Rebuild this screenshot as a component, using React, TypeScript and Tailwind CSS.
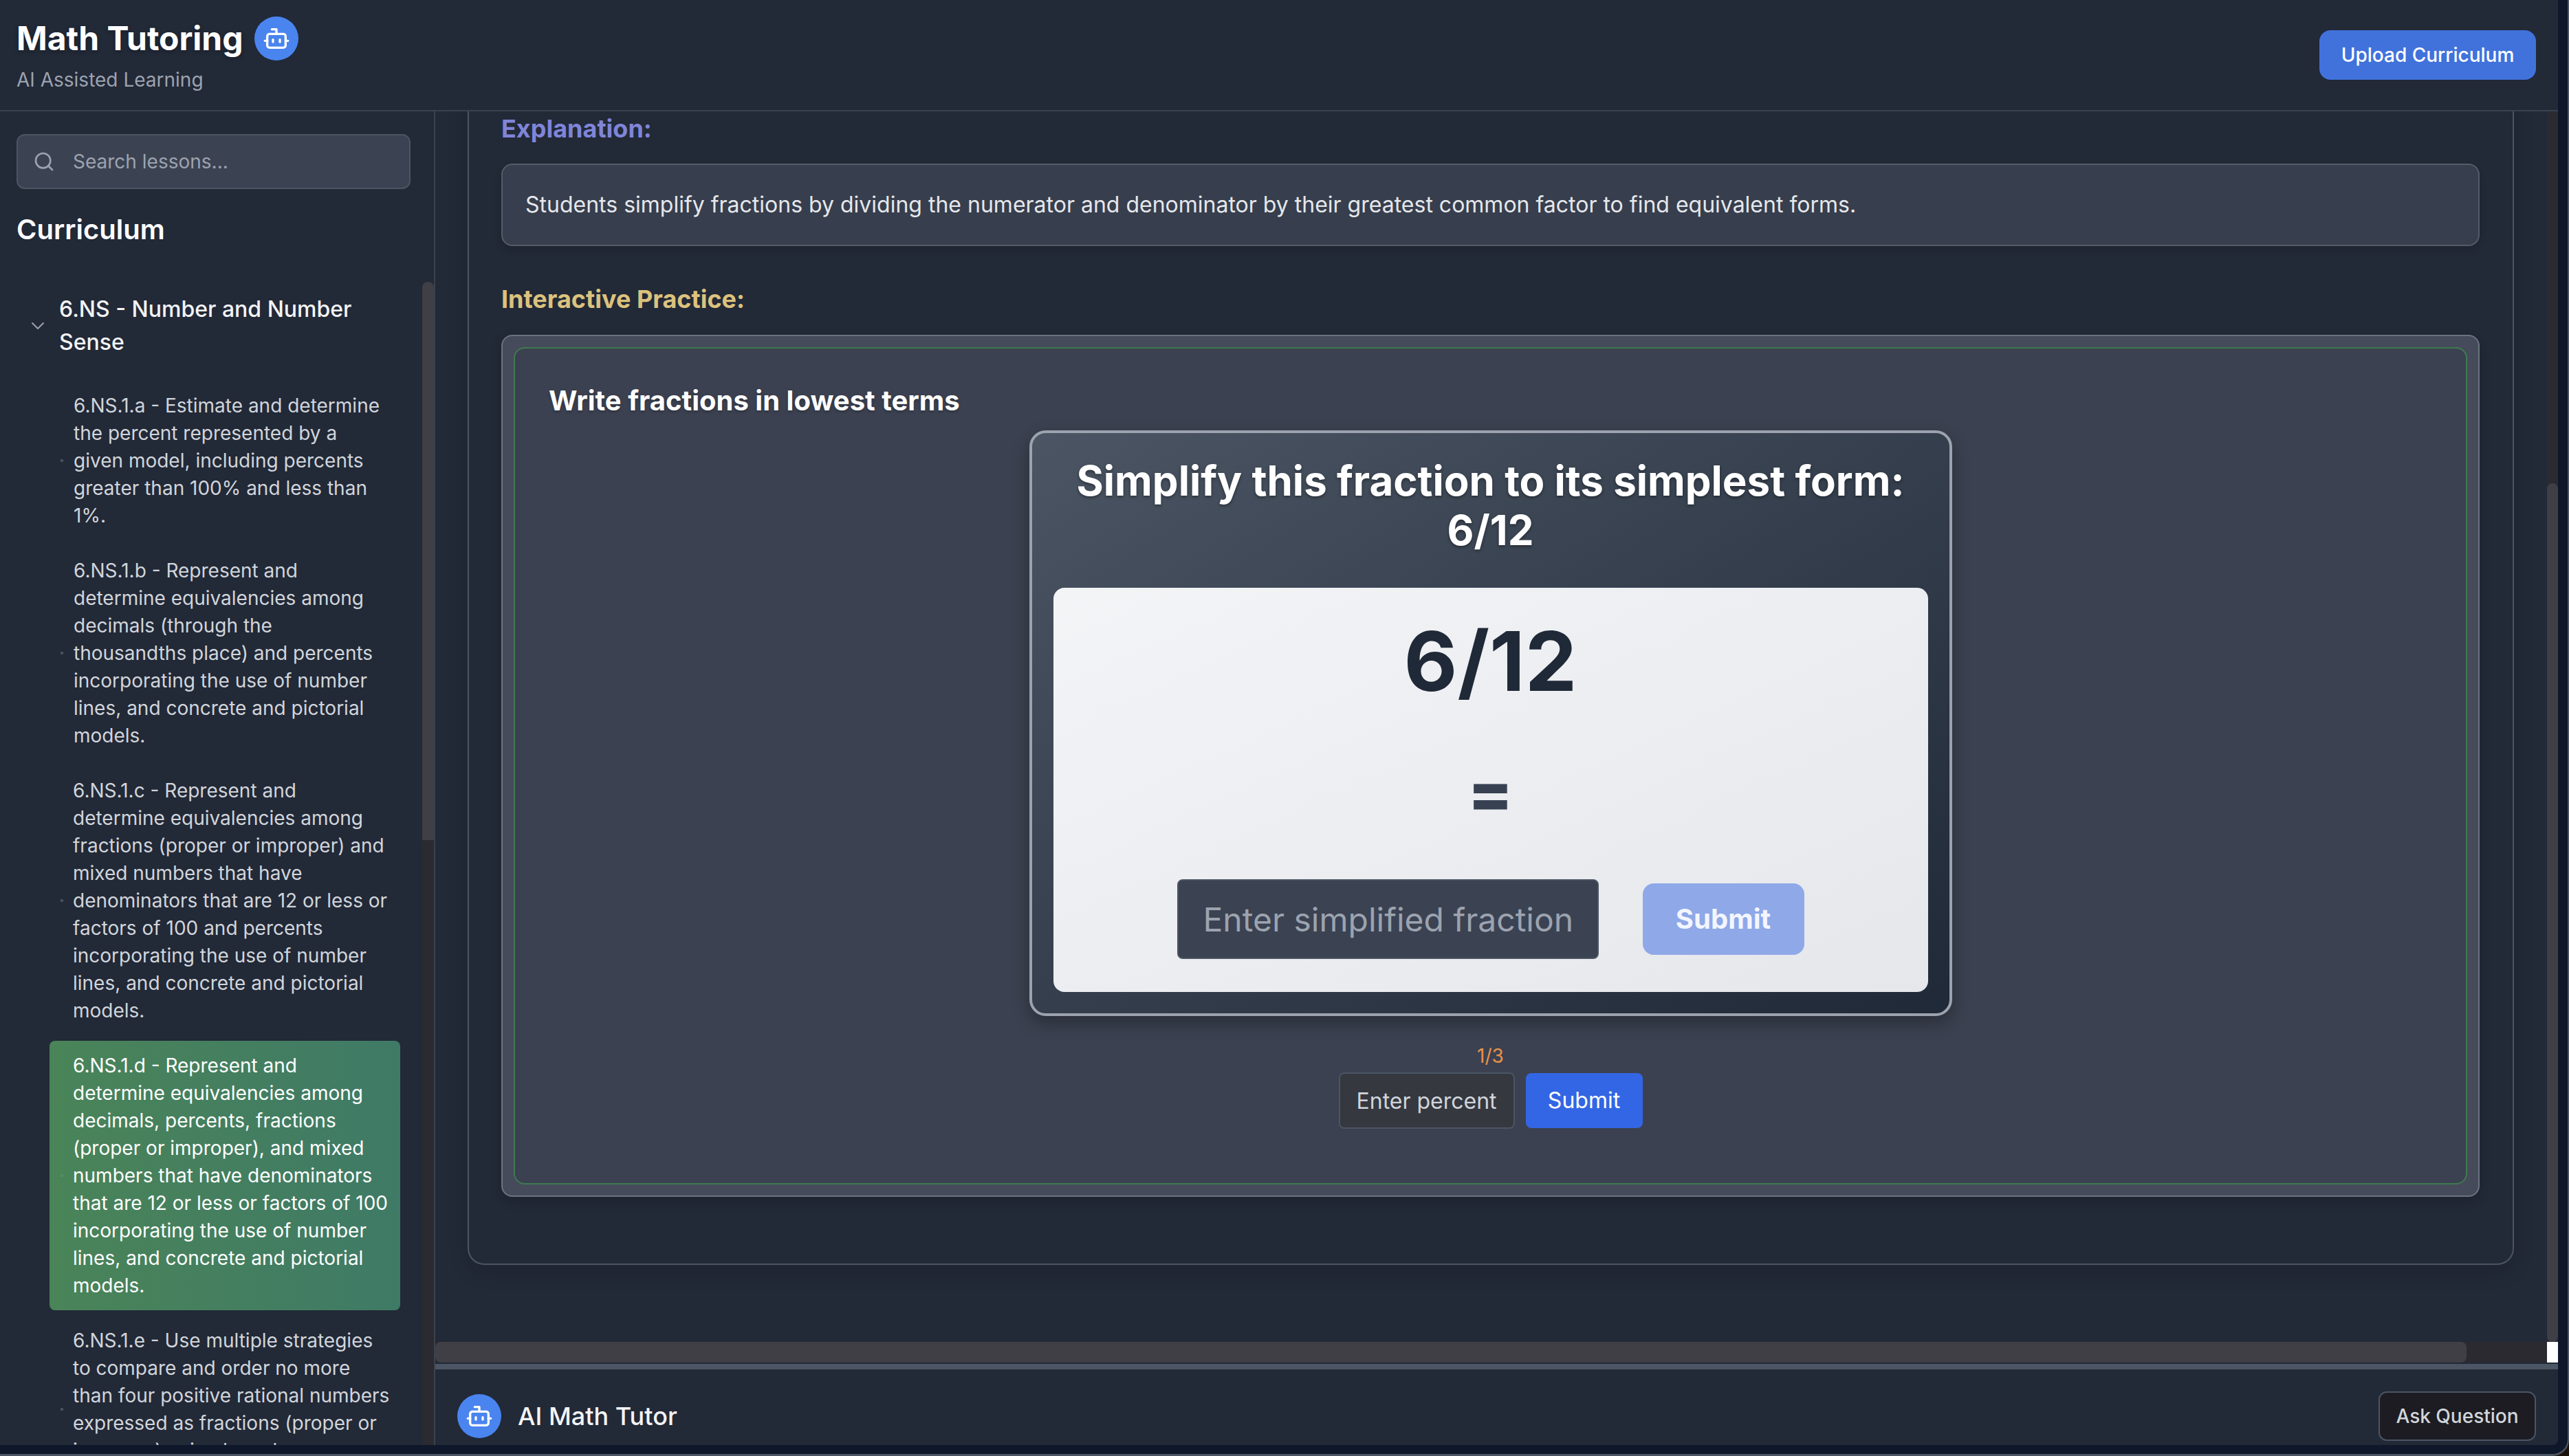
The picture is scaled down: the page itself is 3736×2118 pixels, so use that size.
import { Bot, Search, ChevronDown } from "lucide-react";

const items = [
  { text: "6.NS.1.a - Estimate and determine the percent represented by a given model, including percents greater than 100% and less than 1%.", gap: "gap-[15px]", width: "w-[459px]", active: false },
  { text: "6.NS.1.b - Represent and determine equivalencies among decimals (through the thousandths place) and percents incorporating the use of number lines, and concrete and pictorial models.", gap: "gap-[15px]", width: "w-[459px]", active: false },
  { text: "6.NS.1.c - Represent and determine equivalencies among fractions (proper or improper) and mixed numbers that have denominators that are 12 or less or factors of 100 and percents incorporating the use of number lines, and concrete and pictorial models.", gap: "gap-[14px]", width: "w-[459px]", active: false },
  { text: "6.NS.1.d - Represent and determine equivalencies among decimals, percents, fractions (proper or improper), and mixed numbers that have denominators that are 12 or less or factors of 100 incorporating the use of number lines, and concrete and pictorial models.", gap: "gap-[14px]", width: "w-[459px]", active: true },
  { text: "6.NS.1.e - Use multiple strategies to compare and order no more than four positive rational numbers expressed as fractions (proper or improper), mixed numbers, decimals, and percents.", gap: "gap-[14px]", width: "w-[463px]", active: false },
];

function Avatar() {
  return (
    <div className="w-16 h-16 rounded-full bg-[#4a84ef] flex items-center justify-center shrink-0">
      <Bot size={40} color="#ffffff" strokeWidth={2} />
    </div>
  );
}

export default function App() {
  return (
    <div className="w-[3736px] h-[2118px] bg-[#1d130c] overflow-hidden font-['Inter',sans-serif]">
      <div className="w-full h-full bg-[#0f172a] border-r-2 border-b-[3px] border-[#4b5563] rounded-br-[24px] pr-[14px] pb-[13px]">
        <div className="w-full h-full flex flex-col bg-[#222937] rounded-br-lg overflow-hidden">
          <header className="h-[162px] shrink-0 border-b-2 border-[#3a4250] flex justify-between pl-6 pr-8">
            <div className="pt-6">
              <div className="flex items-center gap-4">
                <h1 className="text-[48px] leading-[64px] font-bold text-white [text-shadow:0_2px_6px_rgba(0,0,0,0.3)]">Math Tutoring</h1>
                <Avatar />
              </div>
              <p className="text-[28px] leading-10 text-[#9ca3af] mt-2">AI Assisted Learning</p>
            </div>
            <button className="self-start mt-11 w-[315px] h-[72px] rounded-2xl bg-[#4172dc] text-white text-[28px] font-medium">Upload Curriculum</button>
          </header>

          <div className="flex flex-1 min-h-0">
            <aside className="w-[633px] shrink-0 border-r-2 border-[#3a4250] flex overflow-hidden">
              <div className="flex-1 min-w-0 pt-[33px] pl-6">
                <div className="w-[573px] h-20 rounded-xl bg-[#3b4252] border-2 border-[#4b5563] flex items-center pl-[22px] gap-[26px]">
                  <Search size={32} color="#9ca3af" strokeWidth={2} />
                  <input className="flex-1 min-w-0 bg-transparent outline-none text-[28px] placeholder:text-[#9ca3af]" placeholder="Search lessons..." />
                </div>
                <h2 className="mt-[31px] text-[40px] leading-14 font-semibold text-white">Curriculum</h2>
                <div className="mt-16 flex items-center">
                  <ChevronDown size={32} color="#9ca3af" strokeWidth={1.5} className="ml-[15px] shrink-0" />
                  <span className="ml-[15px] w-[474px] text-[32px] leading-12 font-[450] text-[#f3f4f6]">6.NS - Number and Number Sense</span>
                </div>
                <ul className="mt-8 ml-12 w-[510px] flex flex-col gap-2">
                  {items.map((it) => (
                    <li key={it.text} className={`${it.gap} flex items-center pl-4 py-4 rounded-lg text-[28px] leading-10 ${it.active ? "bg-gradient-to-r from-[#4a8458] to-[#3f7a66] text-white" : "text-[#d1d5db]"}`}>
                      <span className={`w-1 h-1 shrink-0 rounded-full border ${it.active ? "border-[#5d9a6d]" : "border-[#6b7280]"}`} />
                      <span className={`${it.width} shrink-0`}>{it.text}</span>
                    </li>
                  ))}
                </ul>
              </div>
              <div className="w-[17px] shrink-0 flex flex-col">
                <div className="h-[248px] shrink-0" />
                <div className="h-[812px] shrink-0 rounded-t-lg bg-[#3f3f45]" />
                <div className="flex-1 bg-[#2a2a30]" />
              </div>
            </aside>

            <div className="flex-1 min-w-0 flex flex-col">
              <div className="flex flex-1 min-h-0">
                <main className="flex-1 min-w-0 overflow-hidden pl-[47px] pr-[48px]">
                  <section className="-mt-12 rounded-3xl border-2 border-[#4b5563] pt-[43px] pl-[47px] pr-12 pb-[97px] shadow-[0_10px_30px_rgba(0,0,0,0.12)]">
                    <h3 className="text-[36px] leading-14 font-bold text-[#7f85d9]">Explanation:</h3>
                    <div className="mt-[23px] h-[120px] rounded-2xl bg-[#373e4d] border-2 border-[#545b69] flex items-center pl-[33px] pr-8 text-[32px] text-[#e5e7eb] shadow-[0_6px_12px_rgba(0,0,0,0.12)]">
                      Students simplify fractions by dividing the numerator and denominator by their greatest common factor to find equivalent forms.
                    </div>
                    <h3 className="mt-[49px] text-[36px] leading-14 font-bold text-[#dcc27d]">Interactive Practice:</h3>
                    <div className="mt-6 h-[1254px] rounded-2xl bg-[#454b5a] border-2 border-[#6b7280] p-4 shadow-[0_6px_16px_rgba(0,0,0,0.15)]">
                      <div className="h-full rounded-2xl bg-[#3b4150] border-2 border-[#3f7a4f] pt-12 px-12">
                        <h4 className="ml-px text-[40px] leading-14 font-bold text-white [text-shadow:0_2px_4px_rgba(0,0,0,0.25)]">Write fractions in lowest terms</h4>
                        <div className="mt-[15px] mx-auto w-[1342px] h-[852px] rounded-3xl border-4 border-[#9ca3af] bg-gradient-to-br from-[#4b5563] to-[#1f2937] px-[31px] pt-[33px] shadow-[0_10px_24px_rgba(0,0,0,0.3)]">
                          <h5 className="text-center text-[60px] leading-[72px] font-bold text-white [text-shadow:0_2px_4px_rgba(0,0,0,0.4)]">
                            Simplify this fraction to its simplest form:
                            <br />
                            6/12
                          </h5>
                          <div className="mt-12 h-[588px] rounded-2xl bg-gradient-to-br from-[#f3f4f6] to-[#e5e7eb] flex flex-col items-center pt-[47px]">
                            <div className="text-[120px] leading-[120px] font-bold text-[#1f2937]">6/12</div>
                            <div className="mt-[82px] text-[96px] leading-[96px] font-extrabold text-[#374151]">=</div>
                            <div className="mt-[79px] flex items-center gap-16">
                              <input className="w-[613px] h-[116px] rounded-lg bg-[#3b4252] border-2 border-[#4b5563] pl-9 pr-0 text-[48px] outline-none placeholder:text-[#9ca3af]" placeholder="Enter simplified fraction" />
                              <button className="w-[235px] h-[104px] rounded-2xl bg-[#8fa8e8] text-[#f3f6ff] text-[40px] font-bold">Submit</button>
                            </div>
                          </div>
                        </div>
                        <div className="mt-10 text-center text-[28px] leading-9 text-[#e8914a]">1/3</div>
                        <div className="mt-1.5 flex justify-center items-center gap-4">
                          <input className="w-[256px] h-[82px] rounded-lg bg-[#35383f] border-2 border-[#4b5563] px-6 text-[32px] outline-none placeholder:text-[#d1d5db]" placeholder="Enter percent" />
                          <button className="w-[170px] h-20 rounded-lg bg-[#3366e4] text-white text-[32px]">Submit</button>
                        </div>
                      </div>
                    </div>
                  </section>
                </main>
                <div className="w-4 shrink-0 flex flex-col bg-[#2a2a30]">
                  <div className="h-[541px] shrink-0" />
                  <div className="flex-1 rounded-lg bg-[#3f3f45]" />
                </div>
              </div>
              <div className="h-[30px] shrink-0 flex bg-[#2a2a30]">
                <div className="w-[2954px] rounded-lg bg-[#3f3f45]" />
                <div className="flex-1" />
                <div className="w-4 bg-white" />
              </div>
              <footer className="mt-0.5 h-[118px] shrink-0 border-t-8 border-[#4b5563] flex items-center justify-between pl-8 pr-8 pt-[26px]">
                <div className="flex items-center gap-6">
                  <Avatar />
                  <span className="text-[36px] font-medium text-[#f3f4f6]">AI Math Tutor</span>
                </div>
                <button className="w-[229px] h-[72px] rounded-xl bg-[#1c1c22] border-2 border-[#4b5563] text-[#d1d5db] text-[28px] font-medium">Ask Question</button>
              </footer>
            </div>
          </div>
        </div>
      </div>
    </div>
  );
}
